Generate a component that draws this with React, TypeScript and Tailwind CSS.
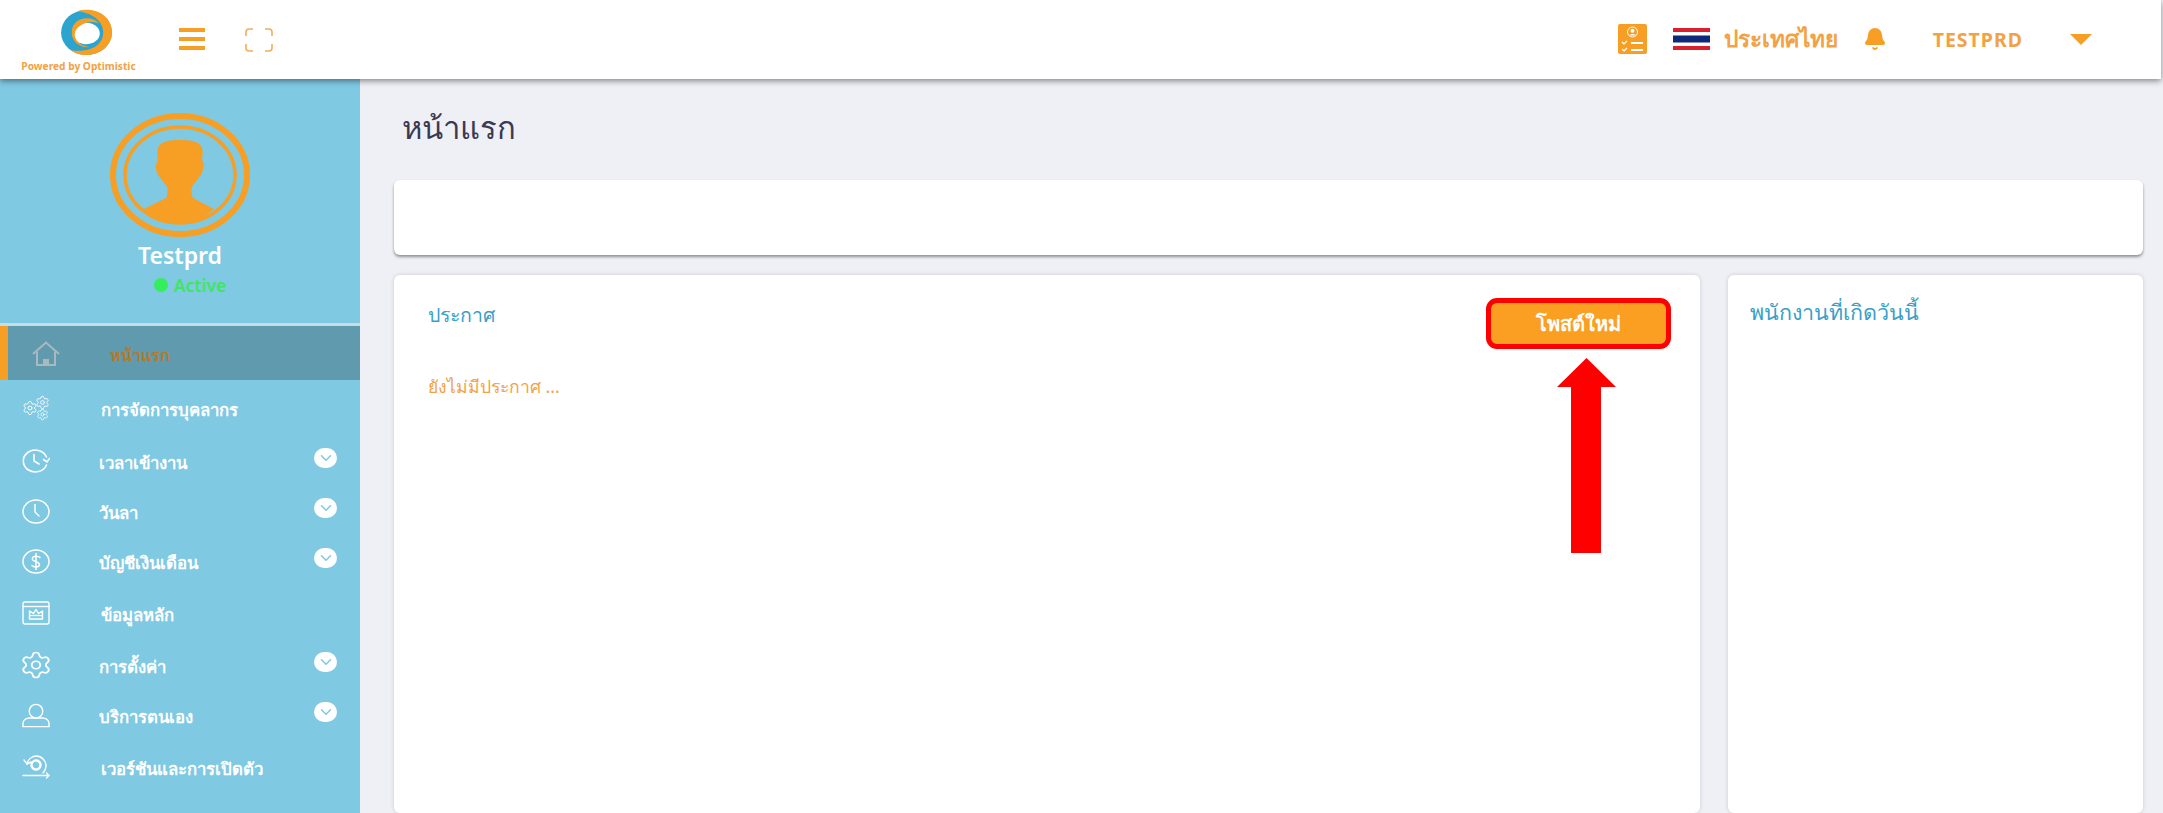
import { Bell, ChevronDown, Settings } from 'lucide-react'
import type { ReactNode } from 'react'

const ClockArrow = () => (
  <svg viewBox="0 0 28 24" className="h-[24px] w-[28px]" fill="none" stroke="#fff" strokeWidth="1.6" strokeLinecap="round">
    <path d="M24.5 8A12 11 0 1 0 24.500 16" />
    <path d="M12 5.500V12l5 3" />
    <path d="M21.500 10.500l3.500 2.500 2.500-3.500" />
  </svg>
)

const ClockIcon = () => (
  <svg viewBox="0 0 28 25" className="h-[25px] w-[28px]" fill="none" stroke="#fff" strokeWidth="1.5" strokeLinecap="round">
    <ellipse cx="14" cy="12.500" rx="13" ry="11.500" />
    <path d="M13 5.500V13l4 4" />
  </svg>
)

const DollarIcon = () => (
  <svg viewBox="0 0 28 25" className="h-[25px] w-[28px]" fill="none" stroke="#fff" strokeWidth="1.5" strokeLinecap="round">
    <ellipse cx="14" cy="12.500" rx="13" ry="11.500" />
    <path d="M18 8.500c-1-1.500-6.500-2-7.500.500-1.500 4 7.500 3 7 7-.5 2.500-6 2.500-7.500.500M14 4.500v16" />
  </svg>
)

const Gears = () => (
  <svg viewBox="0 0 28 26" className="h-[26px] w-[28px]" fill="none" stroke="#fff" strokeWidth="1">
    <Settings x={0} y={5} width={16} height={16} strokeWidth={1.400} />
    <Settings x={13} y={0} width={15} height={15} strokeWidth={1.400} />
    <Settings x={14} y={13} width={13} height={13} strokeWidth={1.400} />
  </svg>
)

const MasterData = () => (
  <svg viewBox="0 0 28 24" className="h-[24px] w-[28px]" fill="none" stroke="#fff" strokeWidth="1.400" strokeLinejoin="round">
    <rect x="1" y="1" width="26" height="22" rx="2" />
    <path d="M1 5.500h26" />
    <path d="M7.500 10l4 2.500L14 8.500l2.500 4 4-2.500v8h-13z" />
    <path d="M7.500 14.500h13" />
  </svg>
)

const UserIcon = () => (
  <svg viewBox="0 0 29 25" className="h-[25px] w-[29px]" fill="none" stroke="#fff" strokeWidth="1.500">
    <circle cx="14.500" cy="8" r="7" />
    <path d="M1 24v-3c0-3.500 3-6 7-6h13c4 0 7 2.500 7 6v3z" />
  </svg>
)

const Release = () => (
  <svg viewBox="0 0 28 26" className="h-[26px] w-[28px]" fill="none" stroke="#fff" strokeWidth="1.400" strokeLinecap="round">
    <path d="M5 10A10 10 0 0 1 14 2a10 10 0 0 1 10 10c0 3-1 5-3 7" />
    <path d="M2 6l3 4 4-2" />
    <circle cx="14" cy="11" r="4.500" strokeWidth="2.400" strokeDasharray="2.500 1.200" />
    <path d="M1 21.500h26M24.500 19l2.500 2.500-2.500 2.500" />
  </svg>
)

const HomeIcon = () => (
  <svg viewBox="0 0 28 25" className="h-[25px] w-[28px]" fill="none" stroke="#a9b9be" strokeWidth="2">
    <path d="M1 13L14 1.500 27 13" />
    <path d="M5 10.500V24h18V10.500" />
    <path d="M11 24v-6h6v6z" fill="#a9b9be" stroke="none" />
  </svg>
)

type NavItem = { label: string; icon: ReactNode; height: string; hasMenu?: boolean }

const navItems: NavItem[] = [
  { label: 'การจัดการบุคลากร', icon: <Gears />, height: 'h-[56px]' },
  { label: 'เวลาเข้างาน', icon: <ClockArrow />, height: 'h-[50px]', hasMenu: true },
  { label: 'วันลา', icon: <ClockIcon />, height: 'h-[50px]', hasMenu: true },
  { label: 'บัญชีเงินเดือน', icon: <DollarIcon />, height: 'h-[50px]', hasMenu: true },
  { label: 'ข้อมูลหลัก', icon: <MasterData />, height: 'h-[54px]' },
  {
    label: 'การตั้งค่า',
    icon: <Settings className="h-[30px] w-[34px] shrink-0" strokeWidth={1.300} preserveAspectRatio="none" />,
    height: 'h-[50px]',
    hasMenu: true,
  },
  { label: 'บริการตนเอง', icon: <UserIcon />, height: 'h-[50px]', hasMenu: true },
  { label: 'เวอร์ชันและการเปิดตัว', icon: <Release />, height: 'h-[54px]' },
]

function Logo() {
  return (
    <div className="flex w-[113px] flex-col items-center pt-[3px]">
      <svg viewBox="0 0 54 48" className="ml-[16px] h-[47px] w-[53px]">
        <ellipse cx="27" cy="24" rx="26" ry="23" fill="#2ba5cf" />
        <path d="M18 2C32-2 53 4 53 24c0 14-13 23-26 23-7 0-13-2-15-5 10 2 31 0 32-17C45 12 32 4 18 2z" fill="#f79f24" />
        <ellipse cx="26.500" cy="25" rx="14" ry="11" fill="#fff" />
        <path d="M40 15C32 6 14 8 12 22c-1 11 8 18 18 17-10-2-15-7-15-13 0-9 15-16 25-11z" fill="#f79f24" />
      </svg>
      <span className="mt-[3px] text-[10.2px] leading-[14px] font-bold whitespace-nowrap text-[#f2a244]">Powered by Optimistic</span>
    </div>
  )
}

function ChecklistBadge() {
  return (
    <svg viewBox="0 0 29 30" className="h-[30px] w-[29px]">
      <rect width="29" height="30" rx="2" fill="#f79f24" />
      <circle cx="14.500" cy="8" r="5" fill="none" stroke="#fff" strokeWidth="1" />
      <circle cx="14.500" cy="6.800" r="2" fill="#fff" />
      <path d="M11.500 11.500c.5-2 5.500-2 6 0" fill="#fff" />
      <path d="M4 18l2 2 3-3M4 25l2 2 3-3" fill="none" stroke="#fff" strokeWidth="1.200" />
      <path d="M13 19h12M13 26h12" stroke="#fff" strokeWidth="2" />
    </svg>
  )
}

function ThaiFlag() {
  return (
    <svg viewBox="0 0 37 22" className="h-[22px] w-[37px]">
      <rect width="37" height="22" fill="#fff" />
      <rect width="37" height="4" fill="#d8202f" />
      <rect y="7.500" width="37" height="7" fill="#10287a" />
      <rect y="18" width="37" height="4" fill="#d8202f" />
    </svg>
  )
}

function Avatar() {
  return (
    <svg viewBox="0 0 140 124" className="h-[124px] w-[140px]" fill="none">
      <ellipse cx="70" cy="62" rx="67" ry="59" stroke="#f79f24" strokeWidth="6" />
      <ellipse cx="70" cy="62" rx="55" ry="48" stroke="#f79f24" strokeWidth="3.500" />
      <path
        d="M34 96L56 85C58 81 58 75 56 72 52 67 47 62 46 56 45 52 47 49 48 47 47 40 47 35 49 33 52 28 60 27 70 27 80 27 88 28 91 33 93 36 93 40 92 47 94 49 94 52 93 56 92 62 87 67 83 72 81 75 81 81 83 85L104 96C94 105 82 110 70 110 58 110 44 105 34 96z"
        fill="#f79f24"
      />
    </svg>
  )
}

function Sidebar() {
  return (
    <aside className="flex w-[360px] shrink-0 flex-col bg-[#7fc9e3] text-white">
      <div className="flex h-[244px] flex-col items-center pt-[34px]">
        <Avatar />
        <div className="mt-[4px] text-[23px] leading-[28px] font-semibold">Testprd</div>
        <div className="mt-[4px] ml-[20px] flex items-center gap-[6px] text-[17.5px] leading-[24px] font-semibold text-[#3ee65f]">
          <span className="h-[14px] w-[14px] rounded-full bg-[#35ee5c]" />
          Active
        </div>
      </div>
      <div className="h-[3px] bg-[#c6dde6]" />
      <div className="flex h-[54px] items-center border-l-[8px] border-[#f79f24] bg-[#609aae] pl-[24px]">
        <HomeIcon />
        <span className="mt-[3px] ml-[50px] text-[16px] font-bold text-[#b37a2c]">หน้าแรก</span>
      </div>
      {navItems.map((item) => (
        <div key={item.label} className={`flex items-center pr-[23px] pl-[22px] ${item.height}`}>
          <span className="flex w-[28px] justify-center">{item.icon}</span>
          <span className={`mt-[3px] text-[16.8px] font-bold whitespace-nowrap ${item.hasMenu ? 'ml-[49px]' : 'ml-[51px]'}`}>{item.label}</span>
          {item.hasMenu && (
            <span className="mt-[-6px] ml-auto flex h-[20px] w-[23px] items-center justify-center rounded-full bg-white">
              <ChevronDown className="h-[18px] w-[18px] text-[#7fc9e3]" strokeWidth={2} />
            </span>
          )}
        </div>
      ))}
    </aside>
  )
}

export default function App() {
  return (
    <div className="flex h-[813px] flex-col overflow-hidden bg-[#eff0f6] font-['Noto_Sans','DejaVu_Sans',sans-serif]">
      <header className="relative z-10 mr-[2px] flex h-[79px] shrink-0 items-center bg-white pr-[69px] pl-[22px] shadow-[0_2px_6px_rgba(0,0,0,0.45)]">
        <Logo />
        <div className="mt-[-1px] ml-[44px] flex h-[22px] w-[26px] flex-col justify-between">
          <span className="h-[4px] bg-[#f79f24]" />
          <span className="h-[4px] bg-[#f79f24]" />
          <span className="h-[4px] bg-[#f79f24]" />
        </div>
        <svg viewBox="0 0 28 24" className="ml-[40px] h-[24px] w-[28px]" fill="none" stroke="#f2ad5c" strokeWidth="1.600">
          <path d="M8 1H4a3 3 0 0 0-3 3v4M20 1h4a3 3 0 0 1 3 3v4M8 23H4a3 3 0 0 1-3-3v-4M20 23h4a3 3 0 0 0 3-3v-4" />
        </svg>
        <div className="ml-auto flex items-center">
          <ChecklistBadge />
          <span className="ml-[26px]"><ThaiFlag /></span>
          <span className="ml-[14px] text-[22.7px] font-semibold text-[#f2a244]">ประเทศไทย</span>
          <Bell className="ml-[25px] h-[24px] w-[24px] fill-[#f79f24] text-[#f79f24]" />
          <span className="ml-[46px] text-[19.5px] font-bold tracking-[1px] text-[#f2a244]">TESTPRD</span>
          <span className="ml-[47px] h-0 w-0 border-x-[11px] border-t-[11px] border-x-transparent border-t-[#f79f24]" />
        </div>
      </header>

      <div className="flex min-h-0 flex-1">
        <Sidebar />
        <main className="flex min-w-0 flex-1 flex-col bg-[#eff0f6] pr-[20px] pl-[34px]">
          <h1 className="mt-[26px] ml-[8px] text-[31px] leading-[44px] font-medium text-[#3a3a52]">หน้าแรก</h1>
          <div className="mt-[31px] h-[75px] rounded-[6px] bg-white shadow-[0_2px_3px_rgba(0,0,0,0.4)]" />
          <div className="mt-[20px] flex min-h-0 flex-1 gap-[28px]">
            <section className="relative flex-1 rounded-[6px] bg-white px-[34px] pt-[25px] shadow-[0_0_4px_rgba(0,0,0,0.15)]">
              <h2 className="text-[19.5px] leading-[30px] font-medium text-[#3a9fc8]">ประกาศ</h2>
              <p className="mt-[42px] text-[17.5px] leading-[28px] text-[#f2a244]">ยังไม่มีประกาศ ...</p>
              <button className="absolute top-[23px] right-[29px] flex h-[51px] w-[185px] items-center justify-center rounded-[11px] border-[5px] border-[#ff0000] bg-[#fa9f22] text-[20px] font-bold text-white">
                โพสต์ใหม่
              </button>
              <svg viewBox="0 0 59 195" className="absolute top-[83px] right-[84px] h-[195px] w-[59px]">
                <path d="M29.500 0L59 29H44V195H14V29H0z" fill="#ff0000" />
              </svg>
            </section>
            <section className="w-[415px] shrink-0 rounded-[6px] bg-white px-[22px] pt-[20px] shadow-[0_0_4px_rgba(0,0,0,0.15)]">
              <h2 className="text-[21.5px] leading-[34px] font-medium text-[#3a9fc8]">พนักงานที่เกิดวันนี้</h2>
            </section>
          </div>
        </main>
      </div>
    </div>
  )
}
